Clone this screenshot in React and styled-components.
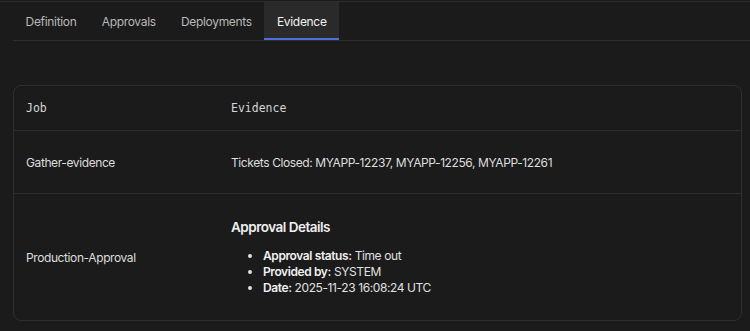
import React from "react";
import styled, { createGlobalStyle } from "styled-components";

const Global = createGlobalStyle`
  html, body { margin: 0; padding: 0; background: #1b1b1b; }
  body { font-family: Inter, "Noto Sans", sans-serif; color: #e2e2e2; -webkit-font-smoothing: antialiased; }
`;

const Page = styled.div`
  width: 750px;
  box-sizing: border-box;
  background: #1b1b1b;
  border-top: 1px solid #2c2c2c;
  margin-top: 1px;
  height: 330px;
`;

const TabBar = styled.div`
  display: flex;
  margin-left: 13px;
  border-bottom: 1px solid #2e2e2e;
  height: 38px;
`;

const Tab = styled.div`
  display: flex;
  align-items: center;
  padding: 3px 12.6px 0;
  font-size: 12px;
  letter-spacing: -0.32px;
  color: ${(p) => (p.$active ? "#f2f2f2" : "#b8b8b8")};
  background: ${(p) => (p.$active ? "#2a2a2a" : "transparent")};
  border-bottom: 2px solid ${(p) => (p.$active ? "#4d70d8" : "transparent")};
  box-sizing: border-box;
`;

const Content = styled.div`
  padding: 44px 8px 0 13px;
`;

const Table = styled.div`
  border: 1px solid #2e2e2e;
  border-radius: 8px;
  overflow: hidden;
`;

const Row = styled.div`
  display: grid;
  grid-template-columns: 205px 1fr;
  align-items: center;
  min-height: ${(p) => p.$h}px;
  & + & { border-top: 1px solid #2e2e2e; }
`;

const Cell = styled.div`
  padding: 0 12px;
  font-size: 12px;
  letter-spacing: -0.4px;
  color: #dedede;
`;

const HeadCell = styled(Cell)`
  font-family: "DejaVu Sans Mono", "Liberation Mono", monospace;
  font-size: 11.5px;
  letter-spacing: 0;
  color: #d6d6d6;
`;

const Heading = styled.div`
  font-weight: 600;
  font-size: 13.5px;
  letter-spacing: -0.5px;
  color: #f0f0f0;
  margin-bottom: 13px;
`;

const List = styled.ul`
  margin: 0;
  padding-left: 32px;
  font-size: 12px;
  line-height: 16px;
  color: #e0e0e0;
  li b { font-weight: 600; color: #f0f0f0; }
`;

export default function App() {
  return (
    <>
      <Global />
      <Page>
        <TabBar>
          <Tab>Definition</Tab>
          <Tab>Approvals</Tab>
          <Tab>Deployments</Tab>
          <Tab $active>Evidence</Tab>
        </TabBar>
        <Content>
          <Table>
            <Row $h={44}>
              <HeadCell>Job</HeadCell>
              <HeadCell>Evidence</HeadCell>
            </Row>
            <Row $h={62}>
              <Cell>Gather-evidence</Cell>
              <Cell>Tickets Closed: MYAPP-12237, MYAPP-12256, MYAPP-12261</Cell>
            </Row>
            <Row $h={126}>
              <Cell>Production-Approval</Cell>
              <Cell>
                <Heading>Approval Details</Heading>
                <List>
                  <li><b>Approval status:</b> Time out</li>
                  <li><b>Provided by:</b> SYSTEM</li>
                  <li><b>Date:</b> 2025-11-23 16:08:24 UTC</li>
                </List>
              </Cell>
            </Row>
          </Table>
        </Content>
      </Page>
    </>
  );
}
